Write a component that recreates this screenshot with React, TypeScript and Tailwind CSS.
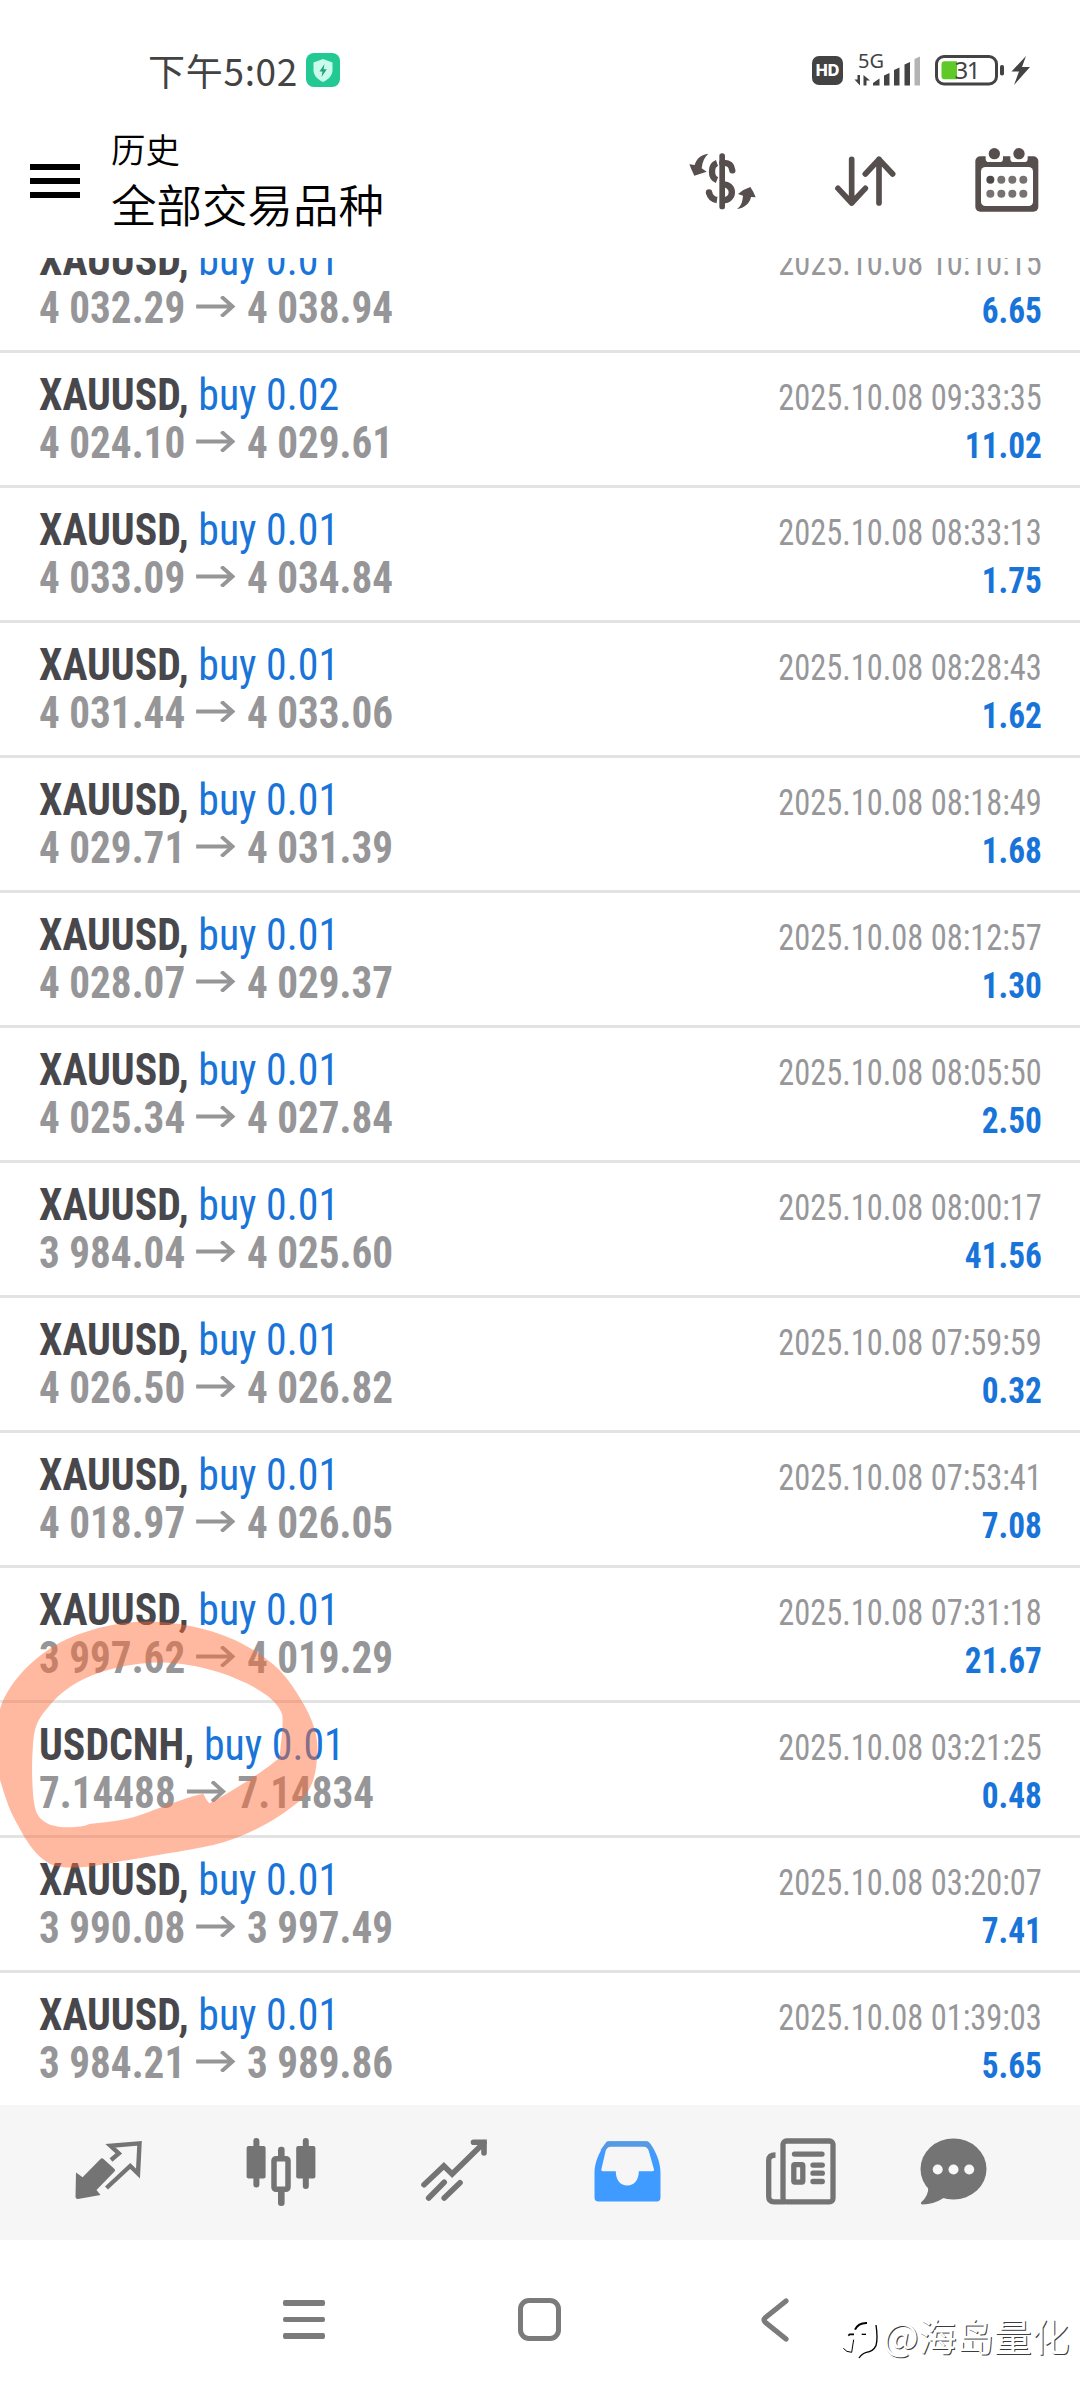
interface Deal {
  symbol: string
  volume: string
  open: string
  close: string
  time: string
  profit: string
}

const deals: Deal[] = [
  { symbol: 'XAUUSD', volume: '0.01', open: '4 032.29', close: '4 038.94', time: '2025.10.08 10:10:15', profit: '6.65' },
  { symbol: 'XAUUSD', volume: '0.02', open: '4 024.10', close: '4 029.61', time: '2025.10.08 09:33:35', profit: '11.02' },
  { symbol: 'XAUUSD', volume: '0.01', open: '4 033.09', close: '4 034.84', time: '2025.10.08 08:33:13', profit: '1.75' },
  { symbol: 'XAUUSD', volume: '0.01', open: '4 031.44', close: '4 033.06', time: '2025.10.08 08:28:43', profit: '1.62' },
  { symbol: 'XAUUSD', volume: '0.01', open: '4 029.71', close: '4 031.39', time: '2025.10.08 08:18:49', profit: '1.68' },
  { symbol: 'XAUUSD', volume: '0.01', open: '4 028.07', close: '4 029.37', time: '2025.10.08 08:12:57', profit: '1.30' },
  { symbol: 'XAUUSD', volume: '0.01', open: '4 025.34', close: '4 027.84', time: '2025.10.08 08:05:50', profit: '2.50' },
  { symbol: 'XAUUSD', volume: '0.01', open: '3 984.04', close: '4 025.60', time: '2025.10.08 08:00:17', profit: '41.56' },
  { symbol: 'XAUUSD', volume: '0.01', open: '4 026.50', close: '4 026.82', time: '2025.10.08 07:59:59', profit: '0.32' },
  { symbol: 'XAUUSD', volume: '0.01', open: '4 018.97', close: '4 026.05', time: '2025.10.08 07:53:41', profit: '7.08' },
  { symbol: 'XAUUSD', volume: '0.01', open: '3 997.62', close: '4 019.29', time: '2025.10.08 07:31:18', profit: '21.67' },
  { symbol: 'USDCNH', volume: '0.01', open: '7.14488', close: '7.14834', time: '2025.10.08 03:21:25', profit: '0.48' },
  { symbol: 'XAUUSD', volume: '0.01', open: '3 990.08', close: '3 997.49', time: '2025.10.08 03:20:07', profit: '7.41' },
  { symbol: 'XAUUSD', volume: '0.01', open: '3 984.21', close: '3 989.86', time: '2025.10.08 01:39:03', profit: '5.65' },
]

function StatusBar() {
  return (
    <div className="flex h-[110px] items-center pt-[30px] pl-[148px] text-[#434343]">
      <span className="text-[37px] leading-[40px] tracking-[0.7px]">下午5:02</span>
      <svg className="ml-[8px]" width="34" height="34" viewBox="0 0 34 34">
        <rect width="34" height="34" rx="8" fill="#22c993" />
        <path d="M17 6 L26.5 9.5 V17 C26.5 22.5 22.5 26.5 17 29 C11.5 26.5 7.5 22.5 7.5 17 V9.5 Z" fill="#c9fbea" />
        <path d="M18.5 11 L13.5 18.5 H16.5 L15.5 24 L20.8 16.2 H17.6 Z" fill="#22a27c" />
      </svg>
      <div className="ml-auto flex h-[34px] items-center pr-[50px]">
        <span className="flex h-[29px] w-[31px] items-center justify-center rounded-[7px] bg-[#434343] font-['Inter'] text-[16px] font-extrabold text-white">
          HD
        </span>
        <svg className="ml-[11px] overflow-visible" width="67" height="34" viewBox="0 0 67 34" fill="#434343">
          <text x="4" y="14.5" fontSize="20" fontFamily="Noto Sans">5G</text>
          <path d="M6 22 V32.5 L0.5 26.5 H3.5 V22 Z" />
          <path d="M9.5 32.5 V22 L16 27.5 H12.5 V32.5 Z" />
          <path d="M19 32.5 V30 L25.5 25.5 V32.5 Z" />
          <path d="M30 32.5 V22.5 L35.5 20 V32.5 Z" />
          <path d="M40 32.5 V17 L45.5 14.5 V32.5 Z" />
          <path d="M50.5 32.5 V11.5 L56 9 V32.5 Z" />
          <path d="M60.5 32.5 V6 L66 3.5 V32.5 Z" fill="#b3b3b3" />
        </svg>
        <svg className="ml-[14px]" width="69" height="31" viewBox="0 0 69 31">
          <rect x="1.5" y="1.5" width="60" height="27.5" rx="7.5" fill="none" stroke="#434343" strokeWidth="3" />
          <path d="M9.5 6.3 H22 V24.3 H9.5 Q6.5 24.3 6.5 21.3 V9.3 Q6.5 6.3 9.5 6.3 Z" fill="#5fc927" />
          <rect x="65" y="10" width="4" height="10.5" rx="1.8" fill="#434343" />
          <text x="19.5" y="23.8" fontSize="24" fontFamily="Noto Sans" letterSpacing="-1.6" fill="#434343">31</text>
        </svg>
        <svg className="ml-[7px]" width="19" height="29" viewBox="0 0 19 29" fill="#434343">
          <path d="M15 0 L0.5 15.5 H8 L3 29 L19 11 H11 Z" />
        </svg>
      </div>
    </div>
  )
}

function Header() {
  return (
    <header className="flex h-[148px] items-center pr-[41px] pb-[6px] pl-[30px] text-black">
      <div className="flex w-[50px] flex-col gap-[8px]">
        <span className="h-[6px] bg-black" />
        <span className="h-[6px] bg-black" />
        <span className="h-[6px] bg-black" />
      </div>
      <div className="mb-[7px] ml-[31px] flex flex-col font-[350]">
        <span className="text-[34.5px] leading-[50px]">历史</span>
        <span className="text-[45.5px] leading-[60px]">全部交易品种</span>
      </div>

      <svg className="ml-auto" width="67" height="57" viewBox="86 368 201 171" fill="#574e4e">
        <rect x="177" y="369" width="17" height="168" rx="8" />
        <g fill="none" stroke="#574e4e" strokeWidth="19">
          <path d="M170 398 C150 405 150 441 170 449" />
          <path d="M186 398 C206 396 214 405 216 420" strokeLinecap="round" />
          <path d="M186 462 C224 460 224 512 186 510" />
          <path d="M146 486 C149 500 156 507 170 509" />
        </g>
        <circle cx="146" cy="486" r="9.5" />
        <path d="M144 370 C123 373 108 384 103 404 L87 402 Q94 420 102 436 L139 424 L124 414 C126 394 133 380 144 370 Z" />
        <path d="M230 536 C246 524 246 510 248 496 L233 491 Q250 476 270 470 Q280 484 286 501 L272 500 C268 520 252 533 230 536 Z" />
      </svg>
      <svg className="ml-[79px]" width="61" height="51" viewBox="524 377 183 153" fill="none" stroke="#574e4e" strokeWidth="17" strokeLinecap="round" strokeLinejoin="round">
        <path d="M574 387 V518 M533 474 L574 518 L615 474" />
        <path d="M656 518 V387 M615 431 L656 387 L697 431" />
      </svg>
      <svg className="mb-[3px] ml-[79px]" width="64" height="64" viewBox="944 353 192 192">
        <rect x="945" y="378" width="189" height="166" rx="15" fill="#574e4e" />
        <path d="M976 370 H1028 V385 Q1028 395 1018 395 H986 Q976 395 976 385 Z" fill="#fff" />
        <path d="M1050 370 H1102 V385 Q1102 395 1092 395 H1060 Q1050 395 1050 385 Z" fill="#fff" />
        <circle cx="1002" cy="370" r="17" fill="#574e4e" />
        <circle cx="1076" cy="370" r="17" fill="#574e4e" />
        <rect x="962" y="410" width="156" height="117" rx="13" fill="#fff" />
        {[448, 490].map((cy) =>
          [990, 1023, 1056, 1089].map((cx) => (
            <circle key={`${cx}-${cy}`} cx={cx} cy={cy} r="12" fill={cx === 990 && cy === 448 ? '#4f4848' : '#777171'} />
          )),
        )}
      </svg>
    </header>
  )
}

function DealRow({ deal }: { deal: Deal }) {
  return (
    <li className="flex h-[135px] justify-between border-b-[3px] border-[#e3e3e3] pr-[38px] pl-[39px] font-['Roboto_Condensed'] whitespace-nowrap">
      <div className="pt-[18px] text-[44px] leading-[48px] font-bold">
        <div className="origin-left scale-x-[0.95] text-[#1874d8]">
          <span className="text-[#48484c]">{deal.symbol},</span>{' '}
          <span className="font-[420]">buy {deal.volume}</span>
        </div>
        <div className="flex origin-left scale-x-[0.935] items-center text-[#969698]">
          {deal.open}
          <svg className="mr-[12px] mb-[3px] ml-[12px]" width="42" height="21" viewBox="0 0 42 21" fill="none" stroke="currentColor" strokeWidth="4">
            <path d="M0 10.5 H39 M27 0.5 L39 10.5 L27 20.5" />
          </svg>
          {deal.close}
        </div>
      </div>
      <div className="origin-right scale-x-[0.9] pt-[21px] text-right text-[36px] leading-[48px]">
        <div className="text-[#97979a]">{deal.time}</div>
        <div className="text-[37px] font-bold text-[#1874d8]">{deal.profit}</div>
      </div>
    </li>
  )
}

function MarkerCircle() {
  return (
    <svg className="pointer-events-none absolute top-[1580px] left-0" width="330" height="300" viewBox="0 0 990 900">
      <path
        fillRule="evenodd"
        fill="rgb(255 106 53 / 0.47)"
        d="M0 388 C25 300 120 215 200 178 C290 138 380 123 460 125 C560 127 680 158 760 210 C830 255 850 280 875 315 C915 375 955 440 952 510
           C950 570 945 620 900 662 C830 720 740 770 640 795 C560 812 430 832 350 846 C300 856 210 872 160 856 C100 830 70 765 40 710 C20 670 10 630 0 600 Z
           M100 480 C105 430 120 410 150 375 C210 300 320 258 450 248 C560 242 670 275 740 310 C790 335 835 365 847 405 C850 430 845 480 838 533
           C800 568 700 632 628 670 Q618 660 610 641 C560 650 480 685 400 712 C350 726 300 728 268 732 C245 744 180 745 150 734 C110 715 105 695 100 650 C95 600 95 540 100 480 Z"
      />
    </svg>
  )
}

function TabBar() {
  return (
    <nav className="flex h-[135px] items-center bg-[#f6f6f6] pb-[3px] text-[#747474]">
      {/* Quotes */}
      <svg className="ml-[74px]" width="69" height="64" viewBox="74 51 69 64" fill="currentColor">
        <path d="M76 84.5 L82.6 89.3 L100.5 71 Q102 69.6 103.5 71 L114.5 81 Q115.8 82.3 114.5 83.6 L96.5 102 L100.5 107 L78 111 Q75.5 111 75.5 108.5 Z" />
        <path d="M111 72 L118.8 65.5 L110.5 57.8 L139.5 55.3 L138 85.5 L130.2 78 L106.5 100" fill="none" stroke="currentColor" strokeWidth="4.4" />
      </svg>
      {/* Chart */}
      <svg className="mt-[1px] ml-[103px]" width="71" height="70" viewBox="246 47 71 70" fill="currentColor">
        <rect x="253.4" y="48" width="6" height="49.5" rx="3" />
        <rect x="246.6" y="56" width="19" height="32.5" rx="2" />
        <rect x="278" y="56.7" width="6.6" height="14" rx="3" />
        <rect x="278" y="98" width="6.6" height="18" rx="3" />
        <rect x="274" y="68.7" width="14" height="30.6" rx="2" fill="none" stroke="currentColor" strokeWidth="5.5" />
        <rect x="302.8" y="48" width="6" height="51" rx="3" />
        <rect x="296.2" y="56" width="19.2" height="32.5" rx="2" />
      </svg>
      {/* Trade */}
      <svg className="ml-[104px]" width="68" height="64" viewBox="421 50 68 64" fill="none" stroke="currentColor" strokeWidth="5.6" strokeLinecap="round">
        <path d="M424 95.7 L443.9 77 L452.1 85 L484 53.7" />
        <path d="M473.5 53.3 H484 V64" />
        <path d="M444.2 93.3 L428.7 109 M460 93.7 L444.2 109" />
      </svg>
      {/* History */}
      <svg className="ml-[105px]" width="67" height="61" viewBox="594 50.5 67 61">
        <path
          fillRule="evenodd"
          fill="#3f9bff"
          d="M609 50.7 H646.5 Q649 50.7 650.5 53.5 C656 61 660.5 72 660.5 82 V107 Q660.5 111 656.5 111 H598.5 Q594.5 111 594.5 107 V82 C594.5 72 599.5 61 605 53.5 Q606.5 50.7 609 50.7 Z
             M611 56 Q607.5 56 606 59 L601.3 79 Q601 80.8 603 80.8 H615.8 C615.8 90 620.5 95 627.3 95 C634 95 638.8 90 638.8 80.8 H652.5 Q654.5 80.8 654 79 L648.5 59.5 Q647.3 56 643.5 56 Z"
        />
        <path d="M607 51 H648 L654 60 H649 Q647 56 643.5 56 H611 Q607.5 56 606 59.5 H600.5 Z" fill="#5799e3" />
      </svg>
      {/* News */}
      <svg className="ml-[105px]" width="70" height="67" viewBox="766 47.5 70 67" fill="none" stroke="currentColor" strokeWidth="5.3">
        <path d="M775.5 64.5 C771 64.5 768.7 66.5 768.7 70 V106 Q768.7 111.3 774 111.3 H785" />
        <rect x="783" y="50.5" width="50" height="60.8" rx="3.5" />
        <path d="M794.5 63.6 H822" strokeLinecap="round" />
        <rect x="793.8" y="74.2" width="9" height="17.4" rx="1" />
        <path d="M813 74.6 H822.3 M813 82.7 H822.3 M813 91 H822.3" strokeLinecap="round" />
      </svg>
      {/* Messages */}
      <svg className="ml-[84px]" width="67" height="67" viewBox="919.5 47.5 67 67">
        <ellipse cx="953" cy="78.5" rx="33" ry="30.5" fill="currentColor" />
        <path d="M927.7 96 Q928.5 105 920.5 112 Q920 114 922 114 Q933 114 944 107 L945 98 Z" fill="currentColor" />
        <circle cx="937.2" cy="79" r="5" fill="#f8f8f8" />
        <circle cx="953" cy="79" r="5" fill="#f8f8f8" />
        <circle cx="968.7" cy="79" r="5" fill="#f8f8f8" />
      </svg>
    </nav>
  )
}

function SystemBar() {
  return (
    <div className="flex h-[160px] items-center pb-[1px] pl-[283px]">
      <div className="flex w-[42px] flex-col gap-[11px]">
        <span className="h-[5.5px] rounded-[2px] bg-[#7b7b7b]" />
        <span className="h-[5.5px] rounded-[2px] bg-[#7b7b7b]" />
        <span className="h-[5.5px] rounded-[2px] bg-[#7b7b7b]" />
      </div>
      <div className="ml-[193px] size-[43px] rounded-[11px] border-[5px] border-[#7b7b7b]" />
      <svg className="ml-[200px]" width="28" height="44" viewBox="0 0 28 44" fill="none" stroke="#7b7b7b" strokeWidth="5.2" strokeLinecap="round" strokeLinejoin="round">
        <path d="M25 3 L4.5 19.5 Q1.5 22 4.5 24.5 L25 41" />
      </svg>
    </div>
  )
}

function Watermark() {
  return (
    <div className="absolute top-[2310px] left-[841px] flex items-center whitespace-nowrap">
      <svg width="42" height="50" viewBox="32 75 126 150" fill="none" stroke="#000" strokeWidth="4">
        <path d="M74 134 Q84 113 110 114" strokeWidth="6" />
        <path d="M54 152 L58 148 H71" strokeWidth="5" />
        <path d="M70 164 L64 202 Q48 202 39 190" strokeWidth="3" />
        <path d="M94 148 H107" />
        <path d="M137 120 Q143 160 137 182 Q128 200 108 202 Q94 206 86 219" />
      </svg>
      <span className="text-[37.7px] leading-[50px] text-white [text-shadow:1px_1px_0_#3c3c3c]">@海岛量化</span>
    </div>
  )
}

export default function App() {
  return (
    <main className="relative flex h-[2400px] w-[1080px] flex-col overflow-hidden bg-white font-['Noto_Sans_CJK_SC',sans-serif]">
      <StatusBar />
      <Header />
      <div className="h-[1847px] overflow-hidden">
        {/* list is scrolled 40px past its first row */}
        <ul className="-mt-[40px]">
          {deals.map((deal) => (
            <DealRow key={deal.time} deal={deal} />
          ))}
        </ul>
      </div>
      <TabBar />
      <SystemBar />
      <MarkerCircle />
      <Watermark />
    </main>
  )
}
